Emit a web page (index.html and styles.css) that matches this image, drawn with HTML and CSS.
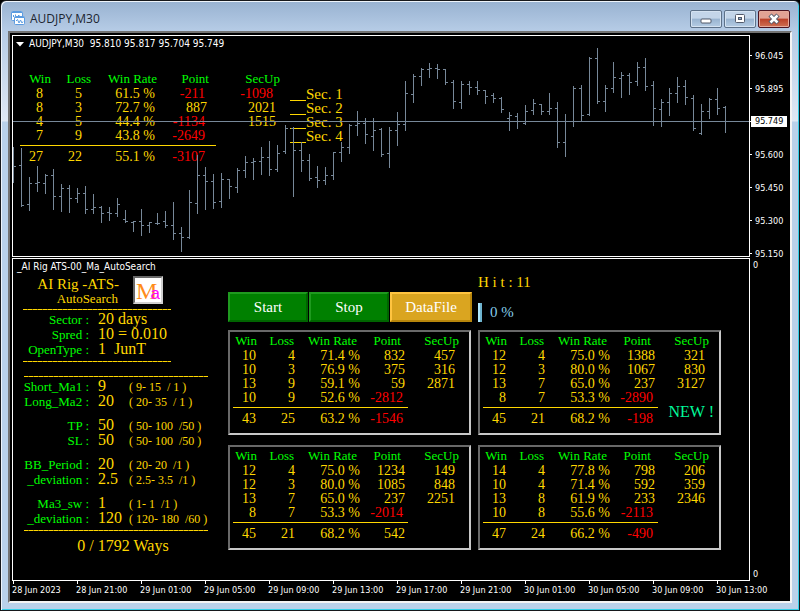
FILE: index.html
```html
<!DOCTYPE html>
<html lang="en">
<head>
<meta charset="utf-8">
<title>AUDJPY,M30</title>
<link rel="stylesheet" href="styles.css">
</head>
<body>
<div class="window">
  <header class="titlebar">
    <svg class="app-icon" width="15" height="15" viewBox="0 0 15 15" aria-hidden="true">
      <rect x=".5" y=".5" width="11" height="9" rx="1" fill="#fff" stroke="#5b9be0"/>
      <path d="M1 1.500H11" stroke="#5b9be0"/>
      <path d="M2.500 6V4M4.500 5.500V3.500M7 4.500H8.500" stroke="#5b9be0" fill="none"/>
      <rect x="3.500" y="5.500" width="10" height="8" rx="1" fill="#fff" stroke="#5b9be0"/>
      <path d="M4 6.500H13" stroke="#5b9be0"/>
      <path d="M5 10L6.500 8.500 8 12 9.500 9 11 12 12 10.500" stroke="#5b9be0" fill="none"/>
    </svg>
    <h1 class="title">AUDJPY,M30</h1>
    <div class="controls">
      <button class="control" type="button" aria-label="Minimize"><svg width="12" height="12" viewBox="0 0 12 12"><rect x="1" y="6" width="10" height="4" rx="1" fill="#fff" stroke="#525a6b"/></svg></button>
      <button class="control" type="button" aria-label="Maximize"><svg width="12" height="12" viewBox="0 0 12 12"><rect x="1.500" y="1.500" width="9" height="8" rx="1" fill="#fff" stroke="#525a6b"/><rect x="4.500" y="4.500" width="3" height="2" fill="#8fb0d0" stroke="#525a6b"/></svg></button>
      <button class="control control-close" type="button" aria-label="Close"><svg width="14" height="12" viewBox="0 0 14 12"><path d="M3 2L11 10M11 2L3 10" stroke="#525a6b" stroke-width="4.500"/><path d="M3.500 2.500L10.500 9.500M10.500 2.500L3.500 9.500" stroke="#fff" stroke-width="2.500"/></svg></button>
    </div>
  </header>

  <main class="client">
    <section class="pane price-pane">
      <p class="caption quote"><svg width="8" height="5" viewBox="0 0 8 5" aria-hidden="true"><path d="M0 0H8L4 4.500Z" fill="#fff"/></svg><span>AUDJPY,M30&nbsp; 95.810 95.817 95.704 95.749</span></p>
      <div class="summary">
        <table class="stats stats-main">
          <colgroup><col><col><col><col><col></colgroup>
          <thead><tr><th>Win</th><th>Loss</th><th>Win Rate</th><th>Point</th><th>SecUp</th></tr></thead>
          <tbody>
            <tr><td>8</td><td>5</td><td>61.5 %</td><td class="neg">-211</td><td class="neg">-1098</td></tr>
            <tr><td>8</td><td>3</td><td>72.7 %</td><td>887</td><td>2021</td></tr>
            <tr><td>4</td><td>5</td><td>44.4 %</td><td class="neg">-1134</td><td>1515</td></tr>
            <tr><td>7</td><td>9</td><td>43.8 %</td><td class="neg">-2649</td><td></td></tr>
          </tbody>
          <tfoot><tr><td>27</td><td>22</td><td>55.1 %</td><td class="neg">-3107</td><td></td></tr></tfoot>
        </table>
        <ul class="sectors"><li>Sec. 1</li><li>Sec. 2</li><li>Sec. 3</li><li>Sec. 4</li></ul>
      </div>
      <svg class="bars" width="736" height="220" viewBox="13 36 736 220" role="img" aria-label="AUDJPY 30 minute bars"><path id="bars"/><path d="M13 121.500H749"/></svg>
    </section>

    <ol class="price-axis">
      <li>96.045</li><li>95.895</li><li class="current"><span>95.749</span></li><li>95.600</li><li>95.450</li><li>95.300</li><li>95.150</li>
    </ol>

    <section class="pane tool-pane">
      <p class="caption">_AI Rig ATS-00_Ma_AutoSearch</p>
      <div class="tool">
        <div class="settings">
          <div class="brand">
            <div class="brand-name"><h2>AI Rig -ATS-</h2><p>AutoSearch</p></div>
            <div class="logo"><span class="logo-m">M</span><span class="logo-a">a</span></div>
          </div>
          <hr class="short">
          <dl class="info">
            <dt>Sector :</dt><dd>20 days</dd>
            <dt>Spred :</dt><dd>10 = 0.010</dd>
            <dt>OpenType :</dt><dd>1&nbsp; JunT</dd>
          </dl>
          <hr class="short">
          <hr class="long">
          <div class="params">
            <dl><dt>Short_Ma1 :</dt><dd>9</dd><dd class="range">( 9- 15&nbsp; / 1 )</dd>
            <dt>Long_Ma2 :</dt><dd>20</dd><dd class="range">( 20- 35&nbsp; / 1 )</dd></dl>
            <dl><dt>TP :</dt><dd>50</dd><dd class="range">( 50- 100&nbsp; /50 )</dd>
            <dt>SL :</dt><dd>50</dd><dd class="range">( 50- 100&nbsp; /50 )</dd></dl>
            <dl><dt>BB_Period :</dt><dd>20</dd><dd class="range">( 20- 20&nbsp; /1 )</dd>
            <dt>_deviation :</dt><dd>2.5</dd><dd class="range">( 2.5- 3.5&nbsp; /1 )</dd></dl>
            <dl><dt>Ma3_sw :</dt><dd>1</dd><dd class="range">( 1- 1&nbsp; /1 )</dd>
            <dt>_deviation :</dt><dd>120</dd><dd class="range">( 120- 180&nbsp; /60 )</dd></dl>
          </div>
          <hr class="long">
          <p class="ways">0 / 1792 Ways</p>
        </div>

        <div class="results">
          <div class="actions">
            <div class="buttons">
              <button class="action" type="button">Start</button>
              <button class="action" type="button">Stop</button>
              <button class="action action-data" type="button">DataFile</button>
            </div>
            <div class="status">
              <p class="hits">H i t : 11</p>
              <p class="progress"><span class="progress-bar"></span>0 %</p>
            </div>
          </div>
          <div class="cards">
            <div class="card">
              <table class="stats">
                <colgroup><col><col><col><col><col></colgroup>
                <thead><tr><th>Win</th><th>Loss</th><th>Win Rate</th><th>Point</th><th>SecUp</th></tr></thead>
                <tbody>
                  <tr><td>10</td><td>4</td><td>71.4 %</td><td>832</td><td>457</td></tr>
                  <tr><td>10</td><td>3</td><td>76.9 %</td><td>375</td><td>316</td></tr>
                  <tr><td>13</td><td>9</td><td>59.1 %</td><td>59</td><td>2871</td></tr>
                  <tr><td>10</td><td>9</td><td>52.6 %</td><td class="neg">-2812</td><td></td></tr>
                </tbody>
                <tfoot><tr><td>43</td><td>25</td><td>63.2 %</td><td class="neg">-1546</td><td></td></tr></tfoot>
              </table>
            </div>
            <div class="card">
              <table class="stats">
                <colgroup><col><col><col><col><col></colgroup>
                <thead><tr><th>Win</th><th>Loss</th><th>Win Rate</th><th>Point</th><th>SecUp</th></tr></thead>
                <tbody>
                  <tr><td>12</td><td>4</td><td>75.0 %</td><td>1388</td><td>321</td></tr>
                  <tr><td>12</td><td>3</td><td>80.0 %</td><td>1067</td><td>830</td></tr>
                  <tr><td>13</td><td>7</td><td>65.0 %</td><td>237</td><td>3127</td></tr>
                  <tr><td>8</td><td>7</td><td>53.3 %</td><td class="neg">-2890</td><td></td></tr>
                </tbody>
                <tfoot><tr><td>45</td><td>21</td><td>68.2 %</td><td class="neg">-198</td><td></td></tr></tfoot>
              </table>
              <strong class="badge">NEW !</strong>
            </div>
            <div class="card">
              <table class="stats">
                <colgroup><col><col><col><col><col></colgroup>
                <thead><tr><th>Win</th><th>Loss</th><th>Win Rate</th><th>Point</th><th>SecUp</th></tr></thead>
                <tbody>
                  <tr><td>12</td><td>4</td><td>75.0 %</td><td>1234</td><td>149</td></tr>
                  <tr><td>12</td><td>3</td><td>80.0 %</td><td>1085</td><td>848</td></tr>
                  <tr><td>13</td><td>7</td><td>65.0 %</td><td>237</td><td>2251</td></tr>
                  <tr><td>8</td><td>7</td><td>53.3 %</td><td class="neg">-2014</td><td></td></tr>
                </tbody>
                <tfoot><tr><td>45</td><td>21</td><td>68.2 %</td><td>542</td><td></td></tr></tfoot>
              </table>
            </div>
            <div class="card">
              <table class="stats">
                <colgroup><col><col><col><col><col></colgroup>
                <thead><tr><th>Win</th><th>Loss</th><th>Win Rate</th><th>Point</th><th>SecUp</th></tr></thead>
                <tbody>
                  <tr><td>14</td><td>4</td><td>77.8 %</td><td>798</td><td>206</td></tr>
                  <tr><td>10</td><td>4</td><td>71.4 %</td><td>592</td><td>359</td></tr>
                  <tr><td>13</td><td>8</td><td>61.9 %</td><td>233</td><td>2346</td></tr>
                  <tr><td>10</td><td>8</td><td>55.6 %</td><td class="neg">-2113</td><td></td></tr>
                </tbody>
                <tfoot><tr><td>47</td><td>24</td><td>66.2 %</td><td class="neg">-490</td><td></td></tr></tfoot>
              </table>
            </div>
          </div>
        </div>
      </div>
    </section>

    <div class="zero-axis"><span>0</span><span>0</span></div>

    <ol class="time-axis">
      <li>28 Jun 2023</li><li>28 Jun 21:00</li><li>29 Jun 01:00</li><li>29 Jun 05:00</li><li>29 Jun 09:00</li><li>29 Jun 13:00</li><li>29 Jun 17:00</li><li>29 Jun 21:00</li><li>30 Jun 01:00</li><li>30 Jun 05:00</li><li>30 Jun 09:00</li><li>30 Jun 13:00</li>
    </ol>
  </main>
</div>
<script src="chart.js"></script>
</body>
</html>
```
FILE: chart.js
```js
// One entry per half hour: high, low, open, close (chart y coordinates).
const bars = [
  [147,182,166,166],[148,206,165,205],[177,210,204,183],[166,191,183,182],[174,193,183,175],
  [169,209,175,196],[184,211,196,188],[185,212,188,198],[188,202,198,193],[186,213,193,209],
  [194,213,209,207],[206,222,207,213],[207,220,212,213],[198,216,213,204],[210,222,219,221],
  [221,231,222,221],[209,235,221,225],[222,232,225,222],[213,224,223,223],[211,227,221,225],
  [202,239,225,233],[227,251,233,237],[190,238,237,202],[155,213,203,175],[167,209,175,181],
  [174,208,181,202],[173,207,201,179],[179,198,179,186],[168,192,187,170],[156,177,170,162],
  [158,179,162,161],[147,174,161,157],[141,175,157,169],[145,171,169,153],[125,153,151,128],
  [127,196,128,150],[142,171,150,160],[154,180,160,178],[166,187,177,180],[167,184,180,175],
  [152,179,175,152],[142,161,152,147],[124,153,147,125],[111,135,125,123],[118,143,123,134],
  [118,150,136,130],[128,156,129,154],[127,167,153,130],[112,145,130,124],[81,130,124,93],
  [74,102,94,76],[68,85,76,69],[63,77,69,68],[64,78,68,69],[69,84,69,82],
  [80,108,82,101],[81,108,102,84],[81,94,84,87],[81,94,87,90],[90,103,90,96],
  [93,102,95,98],[97,112,98,109],[112,130,118,115],[113,128,116,121],[105,124,123,111],
  [99,114,110,103],[104,114,104,111],[93,114,111,108],[102,147,108,142],[114,156,142,121],
  [86,126,121,88],[85,121,88,115],[57,115,114,58],[48,103,58,101],[85,111,101,88],
  [62,92,88,77],[72,97,78,75],[73,94,75,82],[62,85,81,67],[58,90,67,86],
  [81,125,85,108],[99,126,109,102],[88,115,102,93],[77,102,93,86],[80,104,86,97],
  [95,130,98,128],[104,134,133,111],[98,118,111,99],[88,114,99,108],[106,132,107,121]
];
const firstBar = 13;
const pitch = 8;

document.getElementById('bars').setAttribute('d', bars.map(([high, low, open, close], i) => {
  const x = firstBar + i * pitch;
  return `M${x + 0.5} ${high}V${low + 1}M${x - 2} ${open + 0.5}H${x}M${x + 1} ${close + 0.5}H${x + 3}`;
}).join(''));
```
FILE: styles.css
```css
* { box-sizing: border-box; }

body {
  margin: 0;
  background: #000;
  color: #ffd700;
  font-family: "Liberation Serif", "Times New Roman", serif;
}

h1, h2, p, ul, ol, dl, dd { margin: 0; padding: 0; font-weight: normal; }
ul, ol { list-style: none; }

.window {
  display: flex;
  flex-direction: column;
  min-height: 100vh;
  padding: 1px 7px 7px;
  border: 1px solid #16181c;
  border-radius: 6px 6px 0 0;
  background: linear-gradient(#98b2d1, #b6cce6 30px, #dfe8f4 120px, #b9d1ea 121px);
  box-shadow: inset 1px 1px #eef4fb, inset -1px -1px #35cfe8;
}

/* Title bar */
.titlebar {
  display: flex;
  align-items: center;
  height: 29px;
  padding: 4px 2px 0 3px;
}
.title {
  margin-left: 4px;
  color: #1c2530;
  font: 12px/16px "Open Sans", "Noto Sans", sans-serif;
}
.controls { display: flex; gap: 2px; margin-left: auto; }
.control {
  display: flex;
  align-items: center;
  justify-content: center;
  width: 32px;
  height: 18px;
  padding: 0;
  border: 1px solid #5d7189;
  border-radius: 2px;
  background: linear-gradient(#c3d5e9 45%, #98b3d0 50%, #b5cce4);
  box-shadow: inset 0 0 0 1px #d4e2f1;
}
.control-close {
  border-color: #4c1420;
  background: linear-gradient(#e2a294 45%, #bb4028 50%, #cf7154);
  box-shadow: inset 0 0 0 1px #e5aa9c;
}

/* Client area */
.client {
  flex: 1;
  display: grid;
  grid-template-columns: 1fr 40px;
  grid-template-rows: auto 1fr 20px;
  padding: 2px 0 0 2px;
  border: 2px solid;
  border-color: #737373 #f4f4f4 #f4f4f4 #737373;
  background: #000;
}
.pane { position: relative; overflow: hidden; border: 1px solid #fff; }
.price-pane { height: 222px; margin-bottom: 1px; }
.caption, .price-axis, .zero-axis, .time-axis {
  color: #fff;
  font: 9px/12px "DejaVu Sans Condensed", "DejaVu Sans", sans-serif;
  white-space: nowrap;
}
.caption { padding: 2px 4px 0; font-size: 10px; }
.quote { display: flex; align-items: center; gap: 5px; padding: 2px 3px 0; }
.bars {
  position: absolute;
  top: 0;
  left: 0;
  fill: none;
  stroke: #778899;
  pointer-events: none;
}

/* Axes */
.price-axis { margin-bottom: -13px; padding-top: 4px; }
.price-axis li { display: flex; align-items: center; gap: 3px; height: 33px; }
.price-axis li::before { content: ""; width: 2px; height: 1px; background: #fff; }
.price-axis .current { gap: 0; }
.price-axis .current::before { width: 1px; }
.current span { padding: 0 4px; background: #fff; color: #000; line-height: 11px; }
.zero-axis {
  display: flex;
  flex-direction: column;
  justify-content: space-between;
  padding: 1px 3px;
}
.time-axis {
  grid-column: 1 / -1;
  display: grid;
  grid-template-columns: repeat(12, 64px);
}
.time-axis li::before { content: ""; display: block; width: 1px; height: 3px; margin-left: 1px; background: #fff; }

/* Statistics tables */
.stats {
  border-collapse: separate;
  border-spacing: 0;
  table-layout: fixed;
  width: 226px;
  font-size: 14px;
  line-height: 14px;
  text-align: right;
  white-space: nowrap;
}
.stats col:nth-child(1) { width: 24px; }
.stats col:nth-child(2) { width: 38px; }
.stats col:nth-child(3) { width: 65px; }
.stats col:nth-child(4) { width: 48px; }
.stats col:nth-child(5) { width: 51px; }
.stats th, .stats td { padding: 0; vertical-align: top; height: 14px; }
.stats th {
  padding-bottom: 1px;
  color: #00ff00;
  font-size: 13px;
  font-weight: normal;
  text-align: right;
}
.stats th:nth-child(2) { padding-right: 1px; }
.stats th:nth-child(3) { padding-right: 3px; }
.stats th:nth-child(4) { padding-right: 7px; }
.stats td:nth-child(1) { padding-right: 1px; }
.stats td:nth-child(4) { padding-right: 3px; }
.stats td:nth-child(5) { padding-right: 4px; }
.stats td.neg { color: #ff0000; padding-right: 5px; }
.stats tbody tr:last-child td { padding-bottom: 2px; }
.stats tfoot td { padding-top: 4px; border-top: 1px solid #ffd700; }
.stats tfoot td:last-child { border-top: 0; }

.stats-main { width: 260px; }
.stats-main col:nth-child(1) { width: 31px; }
.stats-main col:nth-child(2) { width: 41px; }
.stats-main col:nth-child(3) { width: 66px; }
.stats-main col:nth-child(4) { width: 58px; }
.stats-main col:nth-child(5) { width: 64px; }
.stats-main td:nth-child(1) { padding-right: 8px; }
.stats-main td:nth-child(2) { padding-right: 10px; }
.stats-main th:nth-child(3) { padding-right: 1px; }
.stats-main td:nth-child(3) { padding-right: 3px; }
.stats-main td:nth-child(4) { padding-right: 9px; }
.stats-main td.neg:nth-child(4) { padding-right: 11px; }
.stats-main td.neg:nth-child(5) { padding-right: 7px; }

.summary { display: flex; gap: 10px; padding: 22px 0 0 7px; }
.sectors { padding-top: 15px; font-size: 15px; line-height: 14px; }
.sectors li { display: flex; align-items: flex-end; }
.sectors li::before { content: ""; width: 16px; height: 1px; background: #ffd700; }
.sectors li { white-space: pre; }

/* Search tool */
.tool { display: flex; }
.settings { width: 215px; padding-left: 10px; }
.brand { display: flex; justify-content: space-between; width: 140px; margin: 3px 0 3px; }
.brand-name { flex: 1; text-align: right; padding-right: 14px; }
.brand h2 { font-size: 15px; line-height: 16px; }
.brand-name p { padding-right: 1px; font-size: 13px; line-height: 14px; }
.logo {
  position: relative;
  width: 30px;
  height: 28px;
  border: 2px solid;
  border-color: #696969 #d0d0d0 #d0d0d0 #696969;
  background: #fff;
}
.logo-m { position: absolute; left: 1px; top: 1px; color: #ff8c1a; font-size: 24px; line-height: 24px; }
.logo-a { position: absolute; right: 1px; bottom: 0; color: #ff00ff; font: 17px/17px "Liberation Sans", sans-serif; }
.settings hr {
  height: 1px;
  margin: 0;
  border: 0;
  background: repeating-linear-gradient(90deg, #ffd700 0 4px, #a08700 4px 5px);
}
.settings .short { width: 148px; }
.settings .long { width: 184px; margin: 0 1px; }
.settings .short + .long { margin-top: 14px; }
.info, .params dl {
  display: grid;
  grid-template-columns: 66px 23px 1fr;
  column-gap: 9px;
  grid-auto-rows: 15px;
  align-items: baseline;
  white-space: nowrap;
}
.info { grid-template-columns: 66px 1fr; padding: 1px 0 5px; }
.settings dt { color: #00ff00; font-size: 13px; line-height: 15px; text-align: right; }
.settings dd { font-size: 16px; line-height: 15px; }
.settings .range { font-size: 12px; margin-left: -1px; }
.params { display: flex; flex-direction: column; gap: 9px; padding: 1px 0 5px; }
.ways { width: 200px; padding-top: 7px; font-size: 16px; line-height: 16px; text-align: center; }

.actions { display: flex; align-items: flex-end; gap: 6px; }
.buttons { display: flex; gap: 1px; }
.action {
  width: 80px;
  height: 30px;
  padding: 0;
  border: 2px solid;
  border-color: #1f9a1f #006400 #006400 #1f9a1f;
  background: #008000;
  color: #fff;
  font: 15px/18px "Liberation Serif", serif;
}
.action-data {
  width: 82px;
  border-color: #ffc440 #b8860b #b8860b #ffc440;
  background: #daa520;
}
.hits { font-size: 15px; line-height: 18px; margin-bottom: 12px; }
.progress { display: flex; gap: 8px; color: #87ceeb; font-size: 15px; line-height: 19px; }
.progress-bar { width: 4px; height: 19px; background: linear-gradient(90deg, #aee9ff 50%, #6fb4cf 50%); }

.cards {
  display: grid;
  grid-template-columns: repeat(2, 243px);
  gap: 10px 7px;
  margin-top: 8px;
}
.card {
  position: relative;
  height: 105px;
  padding: 2px 0 0 3px;
  border: 2px solid;
  border-color: #696969 #c8c8c8 #c8c8c8 #696969;
}
.badge {
  position: absolute;
  right: 5px;
  bottom: 12px;
  color: #00fa9a;
  font-size: 16px;
  line-height: 18px;
  font-weight: normal;
}
```
